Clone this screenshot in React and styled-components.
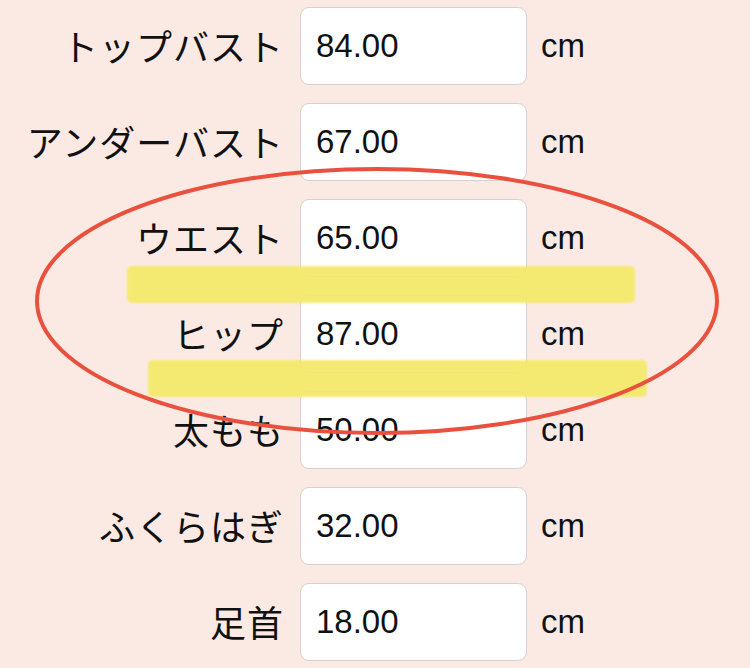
import React from "react";
import styled, { createGlobalStyle } from "styled-components";

const GlobalStyle = createGlobalStyle`
  html, body {
    margin: 0;
    padding: 0;
    background: #fbeae3;
  }
  body {
    width: 750px;
    height: 668px;
    overflow: hidden;
  }
`;

const Page = styled.div`
  position: relative;
  width: 750px;
  height: 668px;
  background: #fbeae3;
`;

const Form = styled.div`
  display: flex;
  flex-direction: column;
  gap: 18px;
  padding-top: 7px;
`;

const Row = styled.div`
  display: flex;
  align-items: center;
  height: 78px;
`;

const Label = styled.label`
  width: 284px;
  margin-right: 16px;
  margin-top: -3px;
  text-align: right;
  font-family: "Noto Sans CJK JP", sans-serif;
  font-size: 36px;
  line-height: 1;
  color: #111;
  white-space: nowrap;
  letter-spacing: 1px;
`;

const Field = styled.input`
  box-sizing: border-box;
  width: 227px;
  height: 78px;
  padding: 0 0 0 15px;
  border: 1px solid #d6d0ce;
  border-radius: 9px;
  background: #fff;
  font-family: "Liberation Sans", Arial, sans-serif;
  font-size: 33px;
  color: #111;
  outline: none;
`;

const Unit = styled.span`
  margin-left: 14px;
  font-family: "Liberation Sans", Arial, sans-serif;
  font-size: 33px;
  color: #111;
`;

// annotation layer drawn on top of the form
const Marks = styled.svg`
  position: absolute;
  left: 0;
  top: 0;
  pointer-events: none;
`;

const Highlight = styled.rect`
  fill: #f4e967;
  opacity: 0.92;
`;

const rows = [
  { label: "トップバスト", value: "84.00" },
  { label: "アンダーバスト", value: "67.00" },
  { label: "ウエスト", value: "65.00" },
  { label: "ヒップ", value: "87.00" },
  { label: "太もも", value: "50.00" },
  { label: "ふくらはぎ", value: "32.00" },
  { label: "足首", value: "18.00" },
];

const App = () => {
  return (
    <Page>
      <GlobalStyle />
      <Form>
        {rows.map((r) => (
          <Row key={r.label}>
            <Label>{r.label}</Label>
            <Field defaultValue={r.value} readOnly />
            <Unit>cm</Unit>
          </Row>
        ))}
      </Form>
      <Marks width="750" height="668" viewBox="0 0 750 668">
        <defs>
          <filter id="soft" x="-5%" y="-30%" width="110%" height="160%">
            <feGaussianBlur stdDeviation="1.2" />
          </filter>
        </defs>
        <Highlight x="127" y="266" width="508" height="37" rx="5" filter="url(#soft)" />
        <Highlight x="148" y="360" width="499" height="37" rx="5" filter="url(#soft)" />
        <ellipse
          cx="377"
          cy="301"
          rx="340"
          ry="132"
          fill="none"
          stroke="#e9503d"
          strokeWidth="4"
        />
      </Marks>
    </Page>
  );
};

export default App;
